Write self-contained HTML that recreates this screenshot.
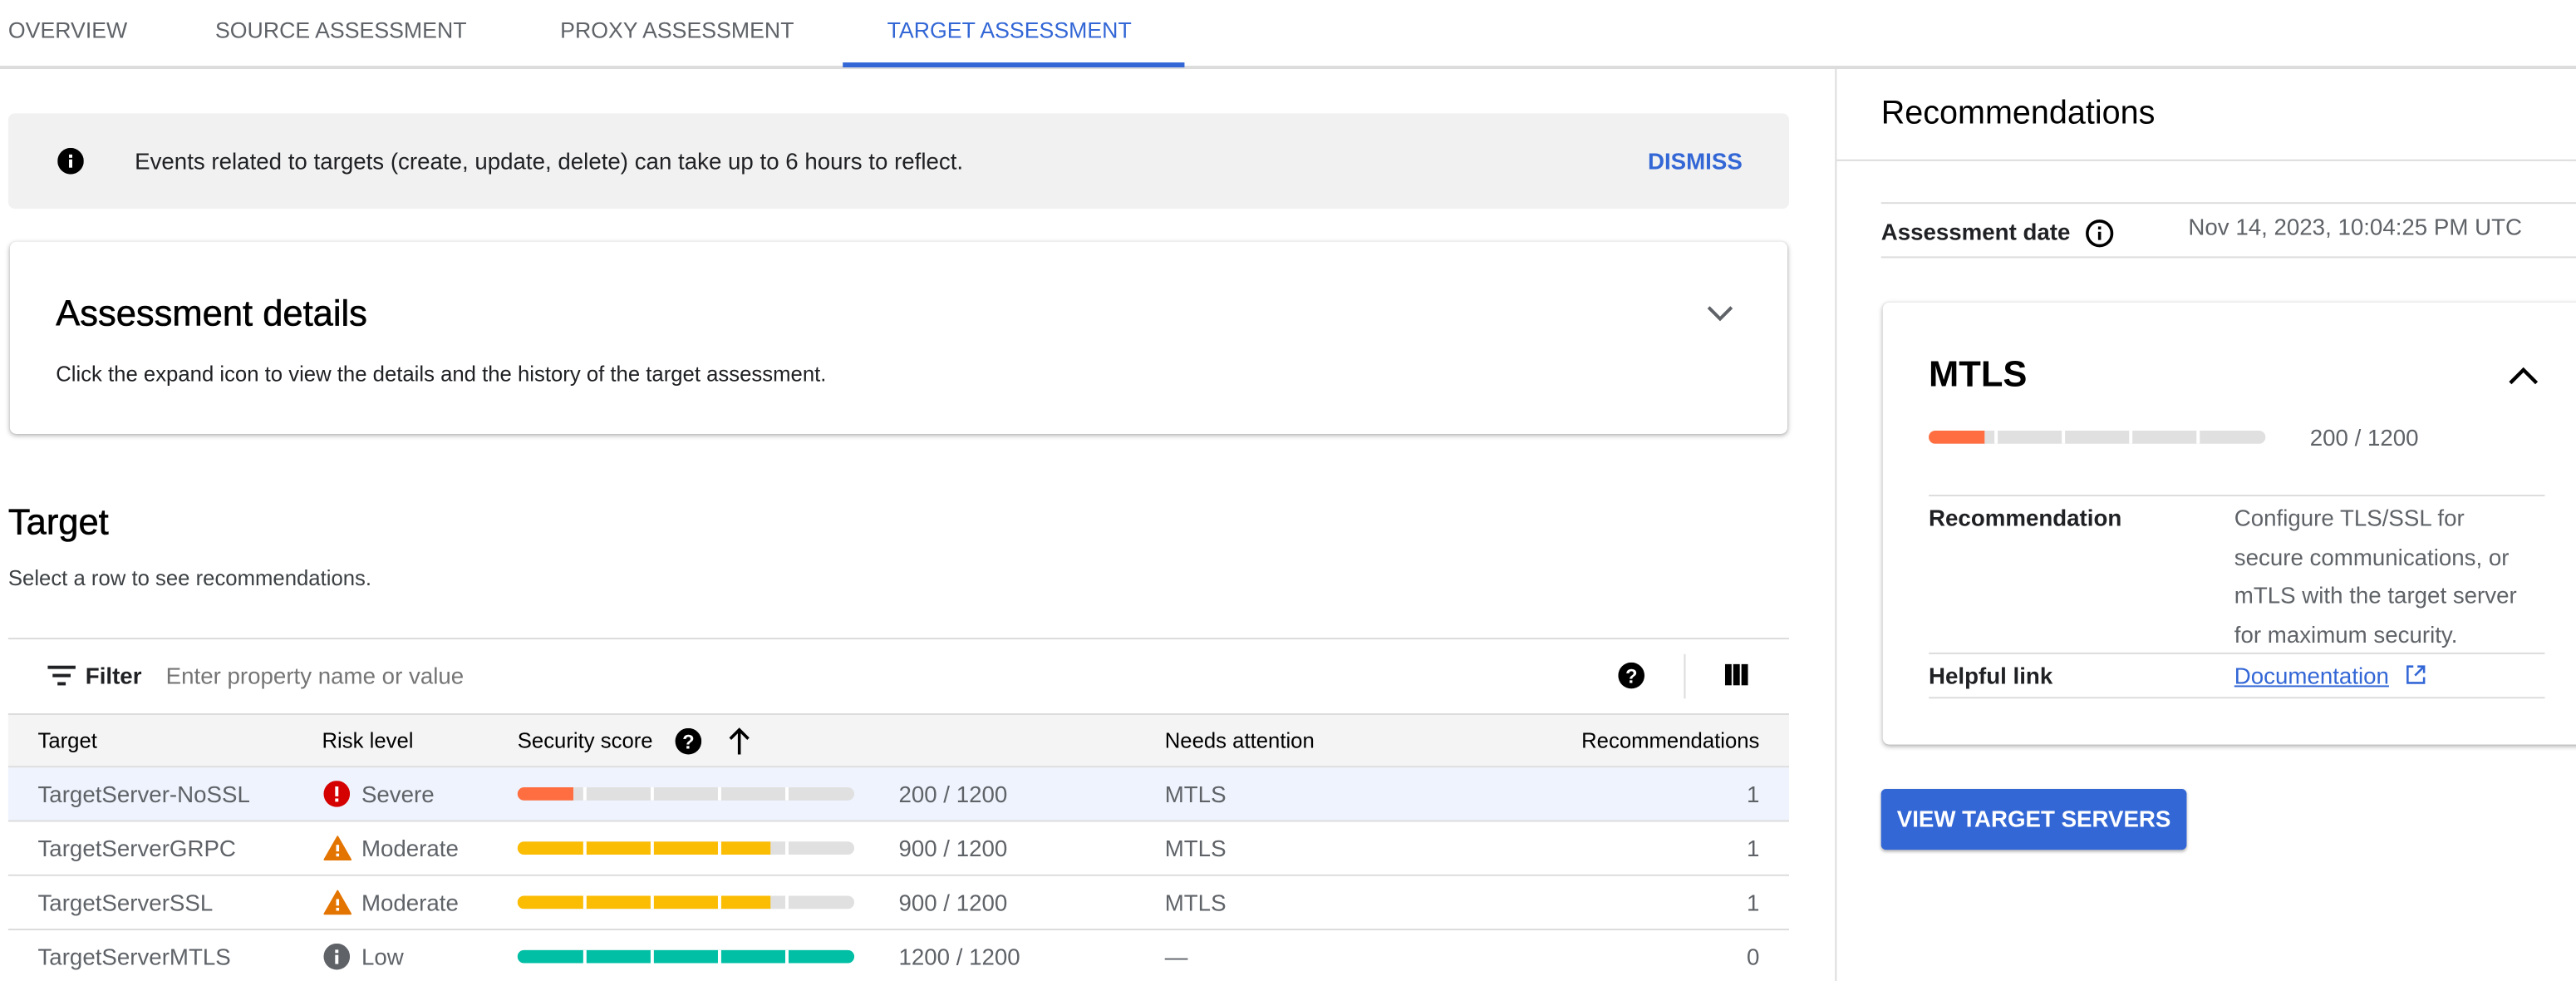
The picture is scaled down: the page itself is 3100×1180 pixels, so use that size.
<!DOCTYPE html>
<html><head><meta charset="utf-8">
<style>
*{box-sizing:border-box;margin:0;padding:0}
html,body{width:3100px;height:1180px;overflow:hidden;background:#fff}
#w{position:absolute;left:0;top:0;width:1568px;height:597px;transform:scale(1.97704);transform-origin:0 0;font-family:"Liberation Sans",Arial,sans-serif;color:#202124}
.a{position:absolute;white-space:nowrap}
.tab{font-size:13.5px;color:#5f6368;top:11px}
.hl{position:absolute;height:1px;background:#dcdcdc}
.bar{position:absolute;height:8px;border-radius:4px;overflow:hidden;background:#e0e0e0;width:205px}
.bar i{position:absolute;top:0;bottom:0;left:0}
.bar b{position:absolute;top:0;bottom:0;width:1.5px;background:#fff}
.cell{font-size:14px;color:#5f6368}
.hd{font-size:13px;color:#000}
</style></head><body><div id="w">
<div class="a tab" style="left:5px">OVERVIEW</div>
<div class="a tab" style="left:131px">SOURCE ASSESSMENT</div>
<div class="a tab" style="left:341px">PROXY ASSESSMENT</div>
<div class="a tab" style="left:540px;color:#3367d6">TARGET ASSESSMENT</div>
<div class="hl" style="left:0;top:40px;width:1568px;height:1.5px"></div>
<div class="a" style="left:513px;top:38px;width:208px;height:3px;background:#3367d6"></div>
<div class="a" style="left:1117px;top:41px;width:1px;height:556px;background:#dcdcdc"></div>

<div class="a" style="left:5px;top:69px;width:1084px;height:58px;background:#f1f1f1;border-radius:4px"></div>
<svg class="a" style="left:35px;top:90px" width="16" height="16" viewBox="0 0 16 16"><circle cx="8" cy="8" r="8" fill="#000"/><rect x="7" y="7" width="2" height="5" fill="#fff"/><rect x="7" y="4" width="2" height="2" fill="#fff"/></svg>
<div class="a" style="left:82px;top:90px;font-size:14px">Events related to targets (create, update, delete) can take up to 6 hours to reflect.</div>
<div class="a" style="left:1003px;top:90px;font-size:14px;color:#3367d6;font-weight:bold">DISMISS</div>

<div class="a" style="left:6px;top:147px;width:1082px;height:117px;background:#fff;border-radius:4px;box-shadow:0 1px 3px rgba(0,0,0,.3),0 0 1px rgba(0,0,0,.1)"></div>
<div class="a" style="left:34px;top:178px;font-size:22px;color:#000;-webkit-text-stroke:0.3px #000">Assessment details</div>
<svg class="a" style="left:1038px;top:184px" width="18" height="14" viewBox="0 0 18 14"><path d="M2 3l7 7 7-7" stroke="#5f6368" stroke-width="2" fill="none"/></svg>
<div class="a" style="left:34px;top:220px;font-size:13px">Click the expand icon to view the details and the history of the target assessment.</div>

<div class="a" style="left:5px;top:305px;font-size:22px;color:#000;-webkit-text-stroke:0.3px #000">Target</div>
<div class="a" style="left:5px;top:344px;font-size:13px;color:#3c4043">Select a row to see recommendations.</div>
<div class="hl" style="left:5px;top:388px;width:1084px"></div>
<svg class="a" style="left:29px;top:404px" width="17" height="14" viewBox="0 0 17 14"><rect x="0" y="1" width="17" height="2" fill="#202124"/><rect x="3" y="6" width="11" height="2" fill="#202124"/><rect x="6" y="11" width="5" height="2" fill="#202124"/></svg>
<div class="a" style="left:52px;top:403px;font-size:14px;font-weight:bold">Filter</div>
<div class="a" style="left:101px;top:403px;font-size:14px;color:#757575">Enter property name or value</div>
<svg class="a" style="left:985px;top:403px" width="16" height="16" viewBox="0 0 16 16"><circle cx="8" cy="8" r="8" fill="#000"/><text x="8" y="12.5" text-anchor="middle" font-size="12" font-weight="bold" fill="#fff" font-family="Liberation Sans">?</text></svg>
<div class="a" style="left:1025px;top:398px;width:1px;height:27px;background:#dcdcdc"></div>
<svg class="a" style="left:1050px;top:404px" width="14" height="13" viewBox="0 0 14 13"><rect x="0" y="0" width="4" height="13" fill="#000"/><rect x="5" y="0" width="4" height="13" fill="#000"/><rect x="10" y="0" width="4" height="13" fill="#000"/></svg>

<div class="a" style="left:5px;top:434px;width:1084px;height:33px;background:#f4f4f4;border-top:1px solid #dcdcdc;border-bottom:1px solid #dcdcdc"></div>
<div class="a hd" style="left:23px;top:443px">Target</div>
<div class="a hd" style="left:196px;top:443px">Risk level</div>
<div class="a hd" style="left:315px;top:443px">Security score</div>
<svg class="a" style="left:411px;top:443px" width="16" height="16" viewBox="0 0 16 16"><circle cx="8" cy="8" r="8" fill="#000"/><text x="8" y="12.5" text-anchor="middle" font-size="12" font-weight="bold" fill="#fff" font-family="Liberation Sans">?</text></svg>
<svg class="a" style="left:443px;top:442px" width="14" height="18" viewBox="0 0 14 18"><path d="M7 17V2M1.5 7.5L7 2l5.5 5.5" stroke="#000" stroke-width="1.8" fill="none"/></svg>
<div class="a hd" style="left:709px;top:443px">Needs attention</div>
<div class="a hd" style="left:900px;width:171px;text-align:right;top:443px">Recommendations</div>

<div class="a" style="left:5px;top:467px;width:1084px;height:33px;background:#eef3fd"></div>
<div class="hl" style="left:5px;top:499px;width:1084px"></div>
<div class="hl" style="left:5px;top:532px;width:1084px"></div>
<div class="hl" style="left:5px;top:565px;width:1084px"></div>

<div class="a cell" style="left:23px;top:475px">TargetServer-NoSSL</div>
<svg class="a" style="left:197px;top:475px" width="16" height="16" viewBox="0 0 16 16"><circle cx="8" cy="8" r="8" fill="#d50000"/><rect x="7" y="3.5" width="2" height="6" fill="#fff"/><rect x="7" y="10.8" width="2" height="2" fill="#fff"/></svg>
<div class="a cell" style="left:220px;top:475px">Severe</div>
<div class="bar" style="left:315px;top:479px"><i style="width:34px;background:#ff6e40"></i><b style="left:40px"></b><b style="left:81px"></b><b style="left:122px"></b><b style="left:163px"></b></div>
<div class="a cell" style="left:547px;top:475px">200 / 1200</div>
<div class="a cell" style="left:709px;top:475px">MTLS</div>
<div class="a cell" style="left:1000px;width:71px;text-align:right;top:475px">1</div>

<div class="a cell" style="left:23px;top:508px">TargetServerGRPC</div>
<svg class="a" style="left:197px;top:508px" width="17" height="16" viewBox="0 0 17 16"><path d="M8.5 1L16.5 15H.5z" fill="#e37400" stroke="#e37400" stroke-linejoin="round"/><rect x="7.6" y="6" width="1.8" height="4" fill="#fff"/><rect x="7.6" y="11.3" width="1.8" height="1.8" fill="#fff"/></svg>
<div class="a cell" style="left:220px;top:508px">Moderate</div>
<div class="bar" style="left:315px;top:512px"><i style="width:154px;background:#fbbc04"></i><b style="left:40px"></b><b style="left:81px"></b><b style="left:122px"></b><b style="left:163px"></b></div>
<div class="a cell" style="left:547px;top:508px">900 / 1200</div>
<div class="a cell" style="left:709px;top:508px">MTLS</div>
<div class="a cell" style="left:1000px;width:71px;text-align:right;top:508px">1</div>

<div class="a cell" style="left:23px;top:541px">TargetServerSSL</div>
<svg class="a" style="left:197px;top:541px" width="17" height="16" viewBox="0 0 17 16"><path d="M8.5 1L16.5 15H.5z" fill="#e37400" stroke="#e37400" stroke-linejoin="round"/><rect x="7.6" y="6" width="1.8" height="4" fill="#fff"/><rect x="7.6" y="11.3" width="1.8" height="1.8" fill="#fff"/></svg>
<div class="a cell" style="left:220px;top:541px">Moderate</div>
<div class="bar" style="left:315px;top:545px"><i style="width:154px;background:#fbbc04"></i><b style="left:40px"></b><b style="left:81px"></b><b style="left:122px"></b><b style="left:163px"></b></div>
<div class="a cell" style="left:547px;top:541px">900 / 1200</div>
<div class="a cell" style="left:709px;top:541px">MTLS</div>
<div class="a cell" style="left:1000px;width:71px;text-align:right;top:541px">1</div>

<div class="a cell" style="left:23px;top:574px">TargetServerMTLS</div>
<svg class="a" style="left:197px;top:574px" width="16" height="16" viewBox="0 0 16 16"><circle cx="8" cy="8" r="8" fill="#5f6368"/><rect x="7" y="7" width="2" height="5.5" fill="#fff"/><rect x="7" y="3.8" width="2" height="2" fill="#fff"/></svg>
<div class="a cell" style="left:220px;top:574px">Low</div>
<div class="bar" style="left:315px;top:578px"><i style="width:205px;background:#00bfa5"></i><b style="left:40px"></b><b style="left:81px"></b><b style="left:122px"></b><b style="left:163px"></b></div>
<div class="a cell" style="left:547px;top:574px">1200 / 1200</div>
<div class="a cell" style="left:709px;top:574px">—</div>
<div class="a cell" style="left:1000px;width:71px;text-align:right;top:574px">0</div>

<div class="a" style="left:1145px;top:58px;font-size:20px;color:#000">Recommendations</div>
<div class="hl" style="left:1118px;top:97px;width:450px"></div>
<div class="hl" style="left:1145px;top:123px;width:423px"></div>
<div class="a" style="left:1145px;top:133px;font-size:14px;font-weight:bold">Assessment date</div>
<svg class="a" style="left:1269px;top:133px" width="18" height="18" viewBox="0 0 18 18"><circle cx="9" cy="9" r="7.5" stroke="#000" stroke-width="1.8" fill="none"/><rect x="8.1" y="8" width="1.8" height="5" fill="#000"/><rect x="8.1" y="4.8" width="1.8" height="1.8" fill="#000"/></svg>
<div class="a" style="left:1332px;top:130px;font-size:14px;color:#5f6368">Nov 14, 2023, 10:04:25 PM UTC</div>
<div class="hl" style="left:1145px;top:156px;width:423px"></div>

<div class="a" style="left:1146px;top:184px;width:430px;height:269px;background:#fff;border-radius:4px;box-shadow:0 1px 3px rgba(0,0,0,.3),0 0 1px rgba(0,0,0,.1)"></div>
<div class="a" style="left:1174px;top:215px;font-size:22px;font-weight:bold;color:#000">MTLS</div>
<svg class="a" style="left:1526px;top:222px" width="20" height="14" viewBox="0 0 20 14"><path d="M2 11l8-8 8 8" stroke="#000" stroke-width="2.2" fill="none"/></svg>
<div class="bar" style="left:1174px;top:262px"><i style="width:34px;background:#ff6e40"></i><b style="left:40px"></b><b style="left:81px"></b><b style="left:122px"></b><b style="left:163px"></b></div>
<div class="a" style="left:1406px;top:258px;font-size:14px;color:#5f6368">200 / 1200</div>
<div class="hl" style="left:1174px;top:301px;width:375px"></div>
<div class="a" style="left:1174px;top:307px;font-size:14px;font-weight:bold">Recommendation</div>
<div class="a" style="left:1360px;top:304px;font-size:14px;color:#5f6368;line-height:23.5px;white-space:normal;width:178px">Configure TLS/SSL for secure communications, or mTLS with the target server for maximum security.</div>
<div class="hl" style="left:1174px;top:397px;width:375px"></div>
<div class="a" style="left:1174px;top:403px;font-size:14px;font-weight:bold">Helpful link</div>
<div class="a" style="left:1360px;top:403px;font-size:14px;color:#3367d6;text-decoration:underline">Documentation</div>
<svg class="a" style="left:1464px;top:404px" width="13" height="13" viewBox="0 0 13 13"><path d="M5 1.5H1.5v10h10V8M7.5 1.5h4v4M11.5 1.5L6 7" stroke="#3367d6" stroke-width="1.3" fill="none"/></svg>
<div class="hl" style="left:1174px;top:424px;width:375px"></div>

<div class="a" style="left:1145px;top:480px;width:186px;height:37px;background:#3367d6;border-radius:3px;box-shadow:0 1px 2px rgba(0,0,0,.3);color:#fff;font-size:14px;font-weight:bold;text-align:center;line-height:37px">VIEW TARGET SERVERS</div>
</div></body></html>
